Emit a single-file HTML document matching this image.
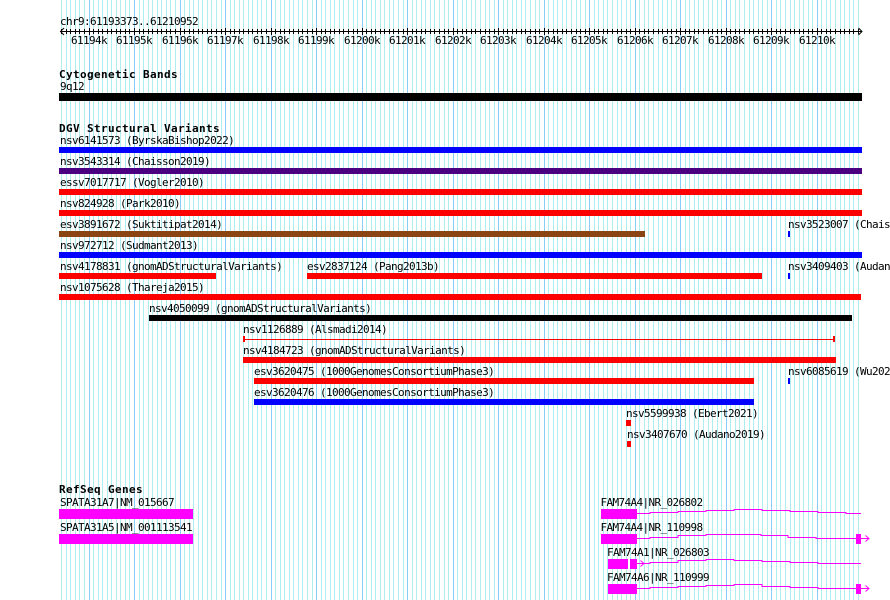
<!DOCTYPE html>
<html><head><meta charset="utf-8"><title>chr9:61193373..61210952</title>
<style>
html,body{margin:0;padding:0;background:#fff}
svg{display:block}
text{font-family:"DejaVu Sans Mono","Liberation Mono",monospace;font-size:11px;letter-spacing:-0.62px;fill:#000;white-space:pre}
text.b{font-weight:bold;font-size:11px;letter-spacing:0.38px}
</style></head><body>
<svg xmlns="http://www.w3.org/2000/svg" width="890" height="600" viewBox="0 0 890 600">
<defs>
<path id="min" d="M61.5 0V600M66.5 0V600M70.5 0V600M75.5 0V600M79.5 0V600M84.5 0V600M93.5 0V600M98.5 0V600M102.5 0V600M107.5 0V600M111.5 0V600M116.5 0V600M120.5 0V600M125.5 0V600M129.5 0V600M139.5 0V600M143.5 0V600M148.5 0V600M152.5 0V600M157.5 0V600M161.5 0V600M166.5 0V600M170.5 0V600M175.5 0V600M184.5 0V600M189.5 0V600M193.5 0V600M198.5 0V600M202.5 0V600M207.5 0V600M211.5 0V600M216.5 0V600M221.5 0V600M230.5 0V600M234.5 0V600M239.5 0V600M243.5 0V600M248.5 0V600M252.5 0V600M257.5 0V600M261.5 0V600M266.5 0V600M275.5 0V600M280.5 0V600M284.5 0V600M289.5 0V600M293.5 0V600M298.5 0V600M302.5 0V600M307.5 0V600M312.5 0V600M321.5 0V600M325.5 0V600M330.5 0V600M334.5 0V600M339.5 0V600M343.5 0V600M348.5 0V600M353.5 0V600M357.5 0V600M366.5 0V600M371.5 0V600M375.5 0V600M380.5 0V600M384.5 0V600M389.5 0V600M393.5 0V600M398.5 0V600M403.5 0V600M412.5 0V600M416.5 0V600M421.5 0V600M425.5 0V600M430.5 0V600M434.5 0V600M439.5 0V600M444.5 0V600M448.5 0V600M457.5 0V600M462.5 0V600M466.5 0V600M471.5 0V600M475.5 0V600M480.5 0V600M485.5 0V600M489.5 0V600M494.5 0V600M503.5 0V600M507.5 0V600M512.5 0V600M516.5 0V600M521.5 0V600M525.5 0V600M530.5 0V600M535.5 0V600M539.5 0V600M548.5 0V600M553.5 0V600M557.5 0V600M562.5 0V600M566.5 0V600M571.5 0V600M576.5 0V600M580.5 0V600M585.5 0V600M594.5 0V600M598.5 0V600M603.5 0V600M607.5 0V600M612.5 0V600M617.5 0V600M621.5 0V600M626.5 0V600M630.5 0V600M639.5 0V600M644.5 0V600M648.5 0V600M653.5 0V600M658.5 0V600M662.5 0V600M667.5 0V600M671.5 0V600M676.5 0V600M685.5 0V600M689.5 0V600M694.5 0V600M698.5 0V600M703.5 0V600M708.5 0V600M712.5 0V600M717.5 0V600M721.5 0V600M730.5 0V600M735.5 0V600M739.5 0V600M744.5 0V600M749.5 0V600M753.5 0V600M758.5 0V600M762.5 0V600M767.5 0V600M776.5 0V600M780.5 0V600M785.5 0V600M790.5 0V600M794.5 0V600M799.5 0V600M803.5 0V600M808.5 0V600M812.5 0V600M821.5 0V600M826.5 0V600M830.5 0V600M835.5 0V600M840.5 0V600M844.5 0V600M849.5 0V600M853.5 0V600M858.5 0V600"/>
<path id="maj" d="M89.5 0V600M134.5 0V600M180.5 0V600M225.5 0V600M271.5 0V600M316.5 0V600M362.5 0V600M407.5 0V600M453.5 0V600M498.5 0V600M544.5 0V600M589.5 0V600M635.5 0V600M680.5 0V600M726.5 0V600M771.5 0V600M817.5 0V600"/>
<clipPath id="t1"><rect x="0" y="29" width="890" height="5"/></clipPath>
<clipPath id="t2"><rect x="0" y="28" width="890" height="7"/></clipPath>
</defs>
<g shape-rendering="crispEdges" fill="none" stroke-width="1">
<use href="#min" stroke="#afeeee"/>
<use href="#maj" stroke="#87cefa"/>
<use href="#min" stroke="#000" clip-path="url(#t1)"/>
<use href="#maj" stroke="#000" clip-path="url(#t2)"/>
<path stroke="#000" d="M60 31.5H862"/>
</g>
<path d="M64 28L60.5 31.5L64 35M858.5 28L862 31.5L858.5 35" fill="none" stroke="#000" stroke-width="1"/>

<text x="60" y="25">chr9:61193373..61210952</text>
<text x="71" y="44">61194k</text><text x="116" y="44">61195k</text><text x="162" y="44">61196k</text><text x="207" y="44">61197k</text><text x="253" y="44">61198k</text><text x="298" y="44">61199k</text><text x="344" y="44">61200k</text><text x="389" y="44">61201k</text><text x="435" y="44">61202k</text><text x="480" y="44">61203k</text><text x="526" y="44">61204k</text><text x="571" y="44">61205k</text><text x="617" y="44">61206k</text><text x="662" y="44">61207k</text><text x="708" y="44">61208k</text><text x="753" y="44">61209k</text><text x="799" y="44">61210k</text>

<text class="b" x="59" y="78">Cytogenetic Bands</text>
<text x="60" y="90">9q12</text>
<rect x="59" y="93" width="803" height="8" fill="#000" shape-rendering="crispEdges"/>

<text class="b" x="59" y="132">DGV Structural Variants</text>
<text x="60" y="144">nsv6141573 (ByrskaBishop2022)</text>
<text x="60" y="165">nsv3543314 (Chaisson2019)</text>
<text x="60" y="186">essv7017717 (Vogler2010)</text>
<text x="60" y="207">nsv824928 (Park2010)</text>
<text x="60" y="228">esv3891672 (Suktitipat2014)</text>
<text x="788" y="228">nsv3523007 (Chais</text>
<text x="60" y="249">nsv972712 (Sudmant2013)</text>
<text x="60" y="270">nsv4178831 (gnomADStructuralVariants)</text>
<text x="307" y="270">esv2837124 (Pang2013b)</text>
<text x="788" y="270">nsv3409403 (Audan</text>
<text x="60" y="291">nsv1075628 (Thareja2015)</text>
<text x="149" y="312">nsv4050099 (gnomADStructuralVariants)</text>
<text x="243" y="333">nsv1126889 (Alsmadi2014)</text>
<text x="243" y="354">nsv4184723 (gnomADStructuralVariants)</text>
<text x="254" y="375">esv3620475 (1000GenomesConsortiumPhase3)</text>
<text x="788" y="375">nsv6085619 (Wu202</text>
<text x="254" y="396">esv3620476 (1000GenomesConsortiumPhase3)</text>
<text x="626" y="417">nsv5599938 (Ebert2021)</text>
<text x="627" y="438">nsv3407670 (Audano2019)</text>

<g shape-rendering="crispEdges">
<rect x="59" y="147" width="803" height="6" fill="#0000ff"/>
<rect x="59" y="168" width="803" height="6" fill="#4b0082"/>
<rect x="59" y="189" width="803" height="6" fill="#ff0000"/>
<rect x="59" y="210" width="803" height="6" fill="#ff0000"/>
<rect x="59" y="231" width="586" height="6" fill="#8b4513"/>
<rect x="788" y="231" width="2" height="6" fill="#0000ff"/>
<rect x="59" y="252" width="803" height="6" fill="#0000ff"/>
<rect x="59" y="273" width="157" height="6" fill="#ff0000"/>
<rect x="307" y="273" width="455" height="6" fill="#ff0000"/>
<rect x="788" y="273" width="2" height="6" fill="#0000ff"/>
<rect x="59" y="294" width="802" height="6" fill="#ff0000"/>
<rect x="149" y="315" width="703" height="6" fill="#000"/>
<rect x="243" y="339" width="592" height="1" fill="#ff0000"/>
<rect x="243" y="336" width="2" height="6" fill="#ff0000"/>
<rect x="833" y="336" width="2" height="6" fill="#ff0000"/>
<rect x="243" y="357" width="593" height="6" fill="#ff0000"/>
<rect x="254" y="378" width="500" height="6" fill="#ff0000"/>
<rect x="788" y="378" width="2" height="6" fill="#0000ff"/>
<rect x="254" y="399" width="500" height="6" fill="#0000ff"/>
<rect x="626" y="420" width="5" height="6" fill="#ff0000"/>
<rect x="627" y="441" width="4" height="6" fill="#ff0000"/>
</g>

<text class="b" x="59" y="493">RefSeq Genes</text>
<text x="60" y="506">SPATA31A7|NM_015667</text>
<text x="60" y="531">SPATA31A5|NM_001113541</text>
<text x="600.5" y="506">FAM74A4|NR_026802</text>
<text x="600.5" y="531">FAM74A4|NR_110998</text>
<text x="607" y="556">FAM74A1|NR_026803</text>
<text x="607" y="581">FAM74A6|NR_110999</text>

<g shape-rendering="crispEdges" fill="#ff00ff">
<rect x="59" y="509" width="134" height="10"/>
<rect x="59" y="534" width="134" height="10"/>
<rect x="601" y="509" width="36" height="10"/>
<rect x="601" y="534" width="36" height="10"/>
<rect x="856" y="534" width="5" height="10"/>
<rect x="608" y="559" width="20" height="10"/>
<rect x="630" y="559" width="7" height="10"/>
<rect x="608" y="584" width="29" height="10"/>
<rect x="856" y="584" width="5" height="10"/>
</g>
<g shape-rendering="crispEdges" fill="none" stroke="#ff00ff" stroke-width="1">
<path d="M637 513.5H650V512.5H678V511.5H706V510.5H734V509.5H762V510.5H790V511.5H818V512.5H846V513.5H861"/>
<path d="M637 538.5H650V537.5H678V535.5H706V534.5H761V535.5H788V537.5H816V538.5H869"/>
<path d="M637 563.5H650V562.5H678V560.5H706V559.5H734V560.5H762V561.5H790V562.5H818V563.5H861"/>
<path d="M637 588.5H650V587.5H678V586.5H706V585.5H734V584.5H762V586.5H790V587.5H818V588.5H869"/>
</g>
<path d="M865.5 535.5L869 538.5L865.5 541.5M865.5 585.5L869 588.5L865.5 591.5M640.5 560.5L644 563.5L640.5 566.5" fill="none" stroke="#ff00ff" stroke-width="1"/>
</svg>
</body></html>
